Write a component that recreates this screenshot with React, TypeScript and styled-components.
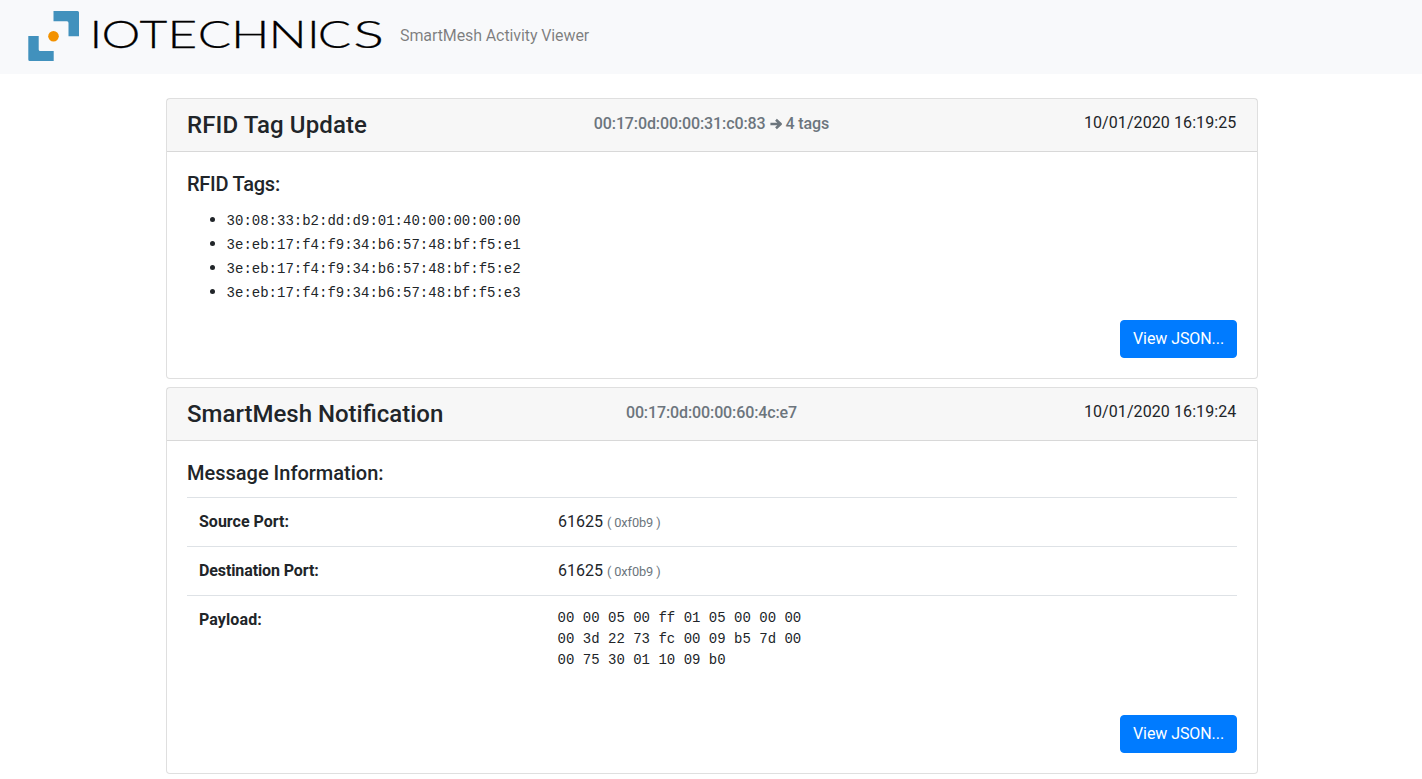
import React from "react";
import styled, { createGlobalStyle } from "styled-components";

const GlobalStyle = createGlobalStyle`
  *, *::before, *::after { box-sizing: border-box; }
  body {
    margin: 0;
    background: #fff;
    color: #212529;
    font-family: Roboto, "Liberation Sans", sans-serif;
    font-size: 16px;
    line-height: 1.5;
  }
`;

const Navbar = styled.nav`
  display: flex;
  align-items: center;
  height: 74px;
  padding: 0 16px 0 28px;
  background: #f8f9fb;
`;

const Logo = styled.svg`
  display: block;
  flex: none;
  margin-right: 18px;
  overflow: visible;
`;

const Wordmark = styled.g`
  font-family: Lato, sans-serif;
  font-weight: 300;
  font-size: 37.5px;
  fill: #000;
  stroke: #000;
  stroke-width: 0.25px;
`;

const NavText = styled.span`
  color: rgba(0, 0, 0, 0.5);
  letter-spacing: -0.1px;
  padding-bottom: 2px;
`;

const Feed = styled.main`
  display: flex;
  flex-direction: column;
  gap: 8px;
  width: 1092px;
  margin: 24px 0 0 166px;
`;

const Card = styled.article`
  border: 1px solid rgba(0, 0, 0, 0.125);
  border-radius: 4px;
  background: #fff;
`;

const CardHeader = styled.header`
  display: grid;
  grid-template-columns: 1fr 1fr 1fr;
  height: 53px;
  padding: 12px 20px;
  background: rgba(0, 0, 0, 0.03);
  border-bottom: 1px solid rgba(0, 0, 0, 0.125);
`;

const Title = styled.h4<{ $tracking?: number }>`
  margin: 0;
  font-size: 24px;
  font-weight: 500;
  line-height: 28.8px;
  white-space: nowrap;
  letter-spacing: ${(p) => (p.$tracking ? `${p.$tracking}px` : "normal")};
`;

const Address = styled.h6`
  display: flex;
  align-items: center;
  justify-content: center;
  gap: 4px;
  height: 25px;
  margin: 0;
  padding-right: 1px;
  font-size: 16px;
  font-weight: 500;
  line-height: 19.2px;
  letter-spacing: -0.11px;
  white-space: nowrap;
  color: #6c757d;
`;

const Timestamp = styled.time`
  padding-right: 0.6px;
  text-align: right;
  letter-spacing: 0.09px;
`;

const CardBody = styled.div`
  padding: 20px;
`;

const SectionTitle = styled.h5<{ $tracking?: number }>`
  margin: 0 0 12px;
  font-size: 20px;
  font-weight: 500;
  line-height: 24px;
  letter-spacing: ${(p) => (p.$tracking ? `${p.$tracking}px` : "normal")};
`;

const TagList = styled.ul`
  margin: 0 0 16px;
  padding-left: 39.6px;
`;

const TagItem = styled.li`
  height: 24px;
`;

const Code = styled.code`
  font-family: "Liberation Mono", monospace;
  font-size: 14px;
`;

const InfoTable = styled.table`
  width: 100%;
  margin-bottom: 16px;
  border-collapse: collapse;
  table-layout: fixed;
`;

const Label = styled.th<{ $tracking?: number }>`
  width: 359px;
  padding: 12px;
  border-top: 1px solid #dee2e6;
  text-align: left;
  vertical-align: top;
  font-weight: 700;
  letter-spacing: ${(p) => (p.$tracking ? `${p.$tracking}px` : "normal")};
`;

const Value = styled.td`
  padding: 12px;
  border-top: 1px solid #dee2e6;
  vertical-align: top;
`;

const Hex = styled.small`
  font-size: 12.8px;
  letter-spacing: -0.12px;
  color: #6c757d;
`;

const Payload = styled.pre`
  margin: 0 0 16px -0.4px;
  font-family: "Liberation Mono", monospace;
  font-size: 14px;
  line-height: 21px;
`;

const Actions = styled.div`
  display: flex;
  justify-content: flex-end;
`;

const Button = styled.button`
  width: 117px;
  height: 38px;
  padding: 6px 0;
  border: 1px solid #007bff;
  border-radius: 4px;
  background: #007bff;
  color: #fff;
  font: inherit;
  letter-spacing: -0.07px;
`;

const wordmark = [
  { char: "I", x: 61.5, stretch: 1.3 },
  { char: "O", x: 73.5, stretch: 1.31 },
  { char: "T", x: 111.6, stretch: 1.28 },
  { char: "E", x: 139.3, stretch: 1.38 },
  { char: "C", x: 169.7, stretch: 1.32 },
  { char: "H", x: 202.9, stretch: 1.36 },
  { char: "N", x: 240.5, stretch: 1.35 },
  { char: "I", x: 278.9, stretch: 1.3 },
  { char: "C", x: 289.7, stretch: 1.32 },
  { char: "S", x: 325.3, stretch: 1.53 },
];

const tags = [
  "30:08:33:b2:dd:d9:01:40:00:00:00:00",
  "3e:eb:17:f4:f9:34:b6:57:48:bf:f5:e1",
  "3e:eb:17:f4:f9:34:b6:57:48:bf:f5:e2",
  "3e:eb:17:f4:f9:34:b6:57:48:bf:f5:e3",
];

const ports = [
  { label: "Source Port:", value: "61625", hex: "( 0xf0b9 )", tracking: 0 },
  { label: "Destination Port:", value: "61625", hex: "( 0xf0b9 )", tracking: -0.11 },
];

const payload = `00 00 05 00 ff 01 05 00 00 00
00 3d 22 73 fc 00 09 b5 7d 00
00 75 30 01 10 09 b0`;

function ArrowRight() {
  return (
    <svg width="12" height="12" viewBox="0 0 12 12" aria-hidden="true">
      <path
        d="M0.4 6H10.4M6 1.8L10.6 6L6 10.2"
        fill="none"
        stroke="currentColor"
        strokeWidth="2.6"
        strokeLinejoin="round"
      />
    </svg>
  );
}

interface EventCardProps {
  title: string;
  titleTracking?: number;
  address: string;
  summary?: string;
  time: string;
  section: string;
  sectionTracking?: number;
  children: React.ReactNode;
}

function EventCard(props: EventCardProps) {
  return (
    <Card>
      <CardHeader>
        <Title $tracking={props.titleTracking}>{props.title}</Title>
        <Address>
          <span>{props.address}</span>
          {props.summary && (
            <>
              <ArrowRight />
              <span>{props.summary}</span>
            </>
          )}
        </Address>
        <Timestamp>{props.time}</Timestamp>
      </CardHeader>
      <CardBody>
        <SectionTitle $tracking={props.sectionTracking}>{props.section}</SectionTitle>
        {props.children}
        <Actions>
          <Button type="button">View JSON...</Button>
        </Actions>
      </CardBody>
    </Card>
  );
}

export default function App() {
  return (
    <>
      <GlobalStyle />
      <Navbar>
        <Logo width="354" height="52" viewBox="0 0 354 52">
          <path d="M25.5 0H49.5Q51 0 51 1.5V25.3H40.5V12Q40.5 10.3 39 10.3H25.5Z" fill="#4191bd" />
          <path d="M0.3 25H10.7V38.5Q10.7 40 12.2 40H25.7V50H1.8Q0.3 50 0.3 48.5Z" fill="#4191bd" />
          <circle cx="25.5" cy="25.2" r="5.3" fill="#f39200" />
          <Wordmark>
            {wordmark.map((letter, i) => (
              <text key={i} transform={`translate(${letter.x} 37) scale(${letter.stretch} 1)`}>
                {letter.char}
              </text>
            ))}
          </Wordmark>
        </Logo>
        <NavText>SmartMesh Activity Viewer</NavText>
      </Navbar>
      <Feed>
        <EventCard
          title="RFID Tag Update"
          titleTracking={0.12}
          address="00:17:0d:00:00:31:c0:83"
          summary="4 tags"
          time="10/01/2020 16:19:25"
          section="RFID Tags:"
          sectionTracking={-0.25}
        >
          <TagList>
            {tags.map((tag) => (
              <TagItem key={tag}>
                <Code>{tag}</Code>
              </TagItem>
            ))}
          </TagList>
        </EventCard>
        <EventCard
          title="SmartMesh Notification"
          address="00:17:0d:00:00:60:4c:e7"
          time="10/01/2020 16:19:24"
          section="Message Information:"
        >
          <InfoTable>
            <tbody>
              {ports.map((port) => (
                <tr key={port.label}>
                  <Label $tracking={port.tracking}>{port.label}</Label>
                  <Value>
                    {port.value} <Hex>{port.hex}</Hex>
                  </Value>
                </tr>
              ))}
              <tr>
                <Label $tracking={0.1}>Payload:</Label>
                <Value>
                  <Payload>{payload}</Payload>
                </Value>
              </tr>
            </tbody>
          </InfoTable>
        </EventCard>
      </Feed>
    </>
  );
}
